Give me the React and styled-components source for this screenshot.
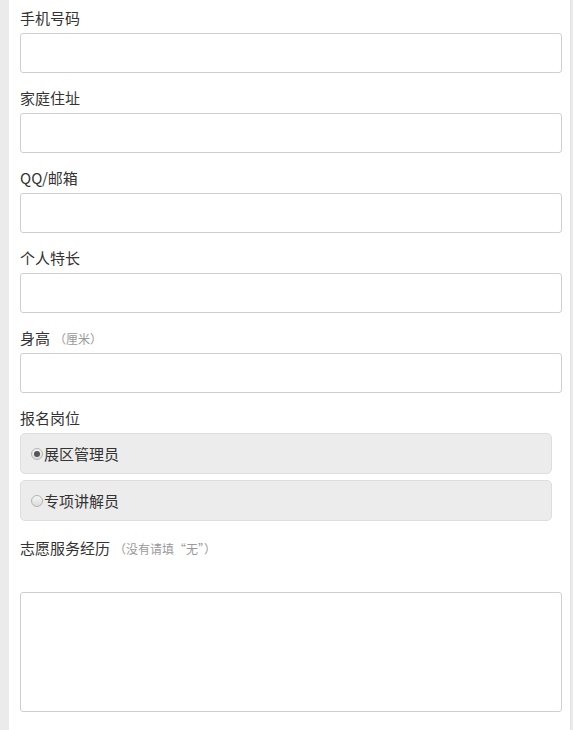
import React, { useState } from "react";
import styled, { createGlobalStyle } from "styled-components";

const GlobalStyle = createGlobalStyle`
    html, body {
        margin: 0;
        padding: 0;
        background: #ebebeb;
        font-family: "Noto Sans CJK SC", "Microsoft YaHei", sans-serif;
    }
`;

const Page = styled.div`
    display: flex;
    min-height: 730px;
`;

const Panel = styled.form`
    margin-left: 9px;
    width: 562px;
    background: #fff;
    border-right: 1px solid #e2e2e2;
    padding: 8px 10px 20px 11px;
    box-sizing: border-box;
`;

const Field = styled.div`
    margin-bottom: ${(p) => p.gap || 15}px;
`;

const Label = styled.div`
    height: 20px;
    line-height: 20px;
    font-size: 15px;
    color: #333;
    margin-bottom: ${(p) => p.space || 5}px;
    white-space: nowrap;
`;

const Hint = styled.span`
    font-size: 12px;
    color: #999;
    margin-left: 4px;
`;

const Input = styled.input`
    display: block;
    width: 542px;
    height: 40px;
    box-sizing: border-box;
    border: 1px solid #cfcfcf;
    border-radius: 3px;
    background: #fff;
    outline: none;
    font-size: 15px;
    padding: 0 8px;
`;

const TextArea = styled.textarea`
    display: block;
    width: 542px;
    height: 120px;
    box-sizing: border-box;
    border: 1px solid #cfcfcf;
    border-radius: 3px;
    resize: none;
    outline: none;
    font-size: 15px;
    padding: 6px 8px;
`;

const Options = styled.div`
    display: flex;
    flex-direction: column;
    gap: 6px;
    width: 532px;
`;

const Option = styled.label`
    display: flex;
    align-items: center;
    height: 41px;
    box-sizing: border-box;
    padding-left: 10px;
    background: #ececec;
    border: 1px solid #dedede;
    border-radius: 5px;
    font-size: 15px;
    color: #333;
    cursor: pointer;
`;

const Radio = styled.span`
    width: 12px;
    height: 12px;
    box-sizing: border-box;
    border-radius: 50%;
    border: 1px solid #b4b4b4;
    background: linear-gradient(#f4f4f4, #dcdcdc);
    display: flex;
    align-items: center;
    justify-content: center;
    margin-right: 1px;
    &::after {
        content: "";
        width: 6px;
        height: 6px;
        border-radius: 50%;
        background: ${(p) => (p.checked ? "#555" : "transparent")};
    }
`;

const fields = [
    { label: "手机号码" },
    { label: "家庭住址" },
    { label: "QQ/邮箱" },
    { label: "个人特长" },
    { label: "身高", hint: "（厘米）" },
];

const jobs = ["展区管理员", "专项讲解员"];

const App = () => {
    const [job, setJob] = useState(0);
    return (
        <Page>
            <GlobalStyle />
            <Panel>
                {fields.map((f) => (
                    <Field key={f.label}>
                        <Label>
                            {f.label}
                            {f.hint && <Hint>{f.hint}</Hint>}
                        </Label>
                        <Input type="text" />
                    </Field>
                ))}
                <Field gap={17}>
                    <Label>报名岗位</Label>
                    <Options>
                        {jobs.map((j, i) => (
                            <Option key={j} onClick={() => setJob(i)}>
                                <Radio checked={job === i} />
                                {j}
                            </Option>
                        ))}
                    </Options>
                </Field>
                <Field>
                    <Label space={34}>
                        志愿服务经历<Hint>（没有请填“无”）</Hint>
                    </Label>
                    <TextArea />
                </Field>
            </Panel>
        </Page>
    );
};

export default App;
